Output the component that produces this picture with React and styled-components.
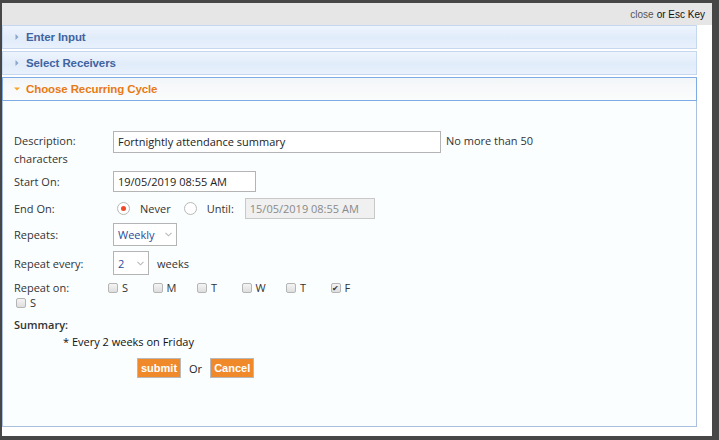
import React from 'react';
import styled, { createGlobalStyle } from 'styled-components';

const GlobalStyle = createGlobalStyle`
  html, body {
    margin: 0;
    padding: 0;
    background: #474747;
  }
  body {
    font-family: "Open Sans", "Noto Sans", sans-serif;
  }
`;

const Frame = styled.div`
  width: 719px;
  height: 440px;
  padding: 3px 7px 4px 2px;
  box-sizing: border-box;
  overflow: hidden;
`;

const Window = styled.div`
  background: #fff;
  height: 433px;
  display: flex;
  flex-direction: column;
`;

const TopBar = styled.div`
  height: 22px;
  background: #e6e6e6;
  display: flex;
  align-items: center;
  justify-content: flex-end;
  padding-right: 7px;
  font-family: "Liberation Sans", Arial, sans-serif;
  font-size: 10px;
  color: #111;
`;

const CloseLink = styled.span`
  color: #555;
  margin-right: 3px;
`;

const Accordion = styled.div`
  width: 695px;
  display: flex;
  flex-direction: column;
  gap: 2px;
`;

const Header = styled.div`
  height: 22px;
  display: flex;
  align-items: center;
  gap: 6px;
  padding-left: 11px;
  font-family: "Liberation Sans", Arial, sans-serif;
  font-weight: bold;
  font-size: 11.5px;
  letter-spacing: -0.1px;
  color: ${p => (p.$active ? '#e87a14' : '#3f64a0')};
  border: 1px solid ${p => (p.$active ? '#7eaae6' : '#c6d8ef')};
  background: ${p =>
    p.$active
      ? 'linear-gradient(#f3f6f8, #fbfcfc)'
      : 'linear-gradient(#edf4fd, #e1ecfa 55%, #e8f0fc)'};
`;

const Arrow = styled.svg`
  width: 6px;
  height: 6px;
  flex: none;
`;

const Panel = styled.div`
  height: 326px;
  border: 1px solid #a9c1de;
  border-top: none;
  background: #fbfefe;
  padding: 30px 0 0 11px;
  box-sizing: border-box;
  font-size: 11px;
  color: #333;
`;

const Flow = styled.div`
  width: 540px;
  line-height: 16px;
  & > * {
    vertical-align: middle;
  }
`;

const Label = styled.span`
  display: inline-block;
  width: ${p => p.$w || 99}px;
  flex: none;
`;

const TextBox = styled.span`
  display: inline-flex;
  align-items: center;
  box-sizing: border-box;
  width: ${p => p.$w}px;
  height: ${p => p.$h || 21}px;
  padding-left: 4px;
  margin-left: ${p => p.$ml || 0}px;
  border: 1px solid ${p => (p.$disabled ? '#c8c8c8' : '#b4b4b4')};
  background: ${p => (p.$disabled ? '#f0f0f0' : '#fff')};
  color: ${p => (p.$disabled ? '#8a8a8a' : '#222')};
  margin-bottom: ${p => p.$mb || 0}px;
`;

const Note = styled.span`
  margin-left: ${p => p.$ml || 5}px;
`;

const Row = styled.div`
  display: flex;
  align-items: center;
  height: ${p => p.$h || 21}px;
  margin-top: ${p => p.$mt || 0}px;
`;

const Radio = styled.span`
  width: 11px;
  height: 11px;
  border-radius: 50%;
  border: 1px solid #b8b8b8;
  background: #fff;
  display: inline-flex;
  align-items: center;
  justify-content: center;
  margin: 0 10px 0 ${p => p.$ml || 0}px;
  &::after {
    content: '';
    width: 5px;
    height: 5px;
    border-radius: 50%;
    background: ${p => (p.$on ? '#f04a24' : 'transparent')};
  }
`;

const Select = styled.span`
  display: inline-flex;
  align-items: center;
  justify-content: space-between;
  box-sizing: border-box;
  width: ${p => p.$w}px;
  height: ${p => p.$h}px;
  padding: 0 4px 0 4px;
  border: 1px solid #b4b4b4;
  background: #fff;
  color: #2a4b9b;
  font-size: 11px;
`;

const Chevron = styled.svg`
  width: 7px;
  height: 5px;
`;

const Days = styled.div`
  display: flex;
  flex-wrap: wrap;
  width: 370px;
  line-height: 15px;
  margin-top: 5px;
`;

const Day = styled.span`
  display: inline-flex;
  align-items: center;
  width: 44.5px;
  height: 15px;
  margin-left: ${p => p.$ml || 0}px;
`;

const Check = styled.span`
  width: 8px;
  height: 8px;
  border: 1px solid #b5b5b5;
  border-radius: 2px;
  background: linear-gradient(#f4f4f4, #dedede);
  margin-right: 4px;
  display: inline-flex;
  align-items: center;
  justify-content: center;
  font-size: 8px;
  line-height: 8px;
  color: #333;
`;

const Summary = styled.div`
  margin-top: 7px;
  height: 16px;
  line-height: 16px;
  font-weight: 600;
  color: #333;
`;

const SummaryLine = styled.div`
  margin: 1px 0 0 49px;
  height: 16px;
  line-height: 16px;
  color: #111;
`;

const Actions = styled.div`
  display: flex;
  align-items: center;
  gap: 8px;
  margin: 8px 0 0 123px;
  color: #222;
`;

const Button = styled.span`
  height: 20px;
  box-sizing: border-box;
  padding: 0 3px;
  display: inline-flex;
  align-items: center;
  background: #f0892a;
  border: 1px solid #b9b9b9;
  color: #fff;
  font-family: "Liberation Sans", Arial, sans-serif;
  font-weight: bold;
  font-size: 11px;
`;

const Tri = ({ down, color }) => (
  <Arrow viewBox="0 0 6 6">
    {down ? <path d="M0 1.5 L6 1.5 L3 4.5 Z" fill={color} /> : <path d="M1.5 0 L4.5 3 L1.5 6 Z" fill={color} />}
  </Arrow>
);

const Caret = () => (
  <Chevron viewBox="0 0 7 5">
    <path d="M0.5 0.8 L3.5 3.8 L6.5 0.8" fill="none" stroke="#b8b8b8" strokeWidth="1.1" />
  </Chevron>
);

const days = ['S', 'M', 'T', 'W', 'T', 'F', 'S'];

export default function App() {
  return (
    <Frame>
      <GlobalStyle />
      <Window>
        <TopBar>
          <CloseLink>close</CloseLink> or Esc Key
        </TopBar>
        <Accordion>
          <Header>
            <Tri color="#8aa6cf" />
            Enter Input
          </Header>
          <Header>
            <Tri color="#8aa6cf" />
            Select Receivers
          </Header>
          <div>
            <Header $active>
              <Tri down color="#f5a623" />
              Choose Recurring Cycle
            </Header>
            <Panel>
              <Flow>
                <Label>Description:</Label>
                <TextBox $w={328} $h={22} $mb={-3}>Fortnightly attendance summary</TextBox>
                <Note>No more than 50 characters</Note>
              </Flow>
              <Row $mt={4}>
                <Label>Start On:</Label>
                <TextBox $w={143}>19/05/2019 08:55 AM</TextBox>
              </Row>
              <Row $mt={6}>
                <Label>End On:</Label>
                <Radio $on $ml={4} />
                <span>Never</span>
                <Radio $ml={13} />
                <span>Until:</span>
                <TextBox $w={130} $ml={11} $disabled>15/05/2019 08:55 AM</TextBox>
              </Row>
              <Row $mt={4} $h={23}>
                <Label>Repeats:</Label>
                <Select $w={64} $h={23}>
                  Weekly
                  <Caret />
                </Select>
              </Row>
              <Row $mt={5} $h={24}>
                <Label>Repeat every:</Label>
                <Select $w={36} $h={24}>
                  2
                  <Caret />
                </Select>
                <Note $ml={8}>weeks</Note>
              </Row>
              <Days>
                <Label $w={94}>Repeat on:</Label>
                {days.map((d, i) => (
                  <Day key={i} $ml={i === 6 ? 2 : 0}>
                    <Check>{i === 5 ? '✔' : ''}</Check>
                    {d}
                  </Day>
                ))}
              </Days>
              <Summary>Summary:</Summary>
              <SummaryLine>* Every 2 weeks on Friday</SummaryLine>
              <Actions>
                <Button>submit</Button>
                <span>Or</span>
                <Button>Cancel</Button>
              </Actions>
            </Panel>
          </div>
        </Accordion>
      </Window>
    </Frame>
  );
}
